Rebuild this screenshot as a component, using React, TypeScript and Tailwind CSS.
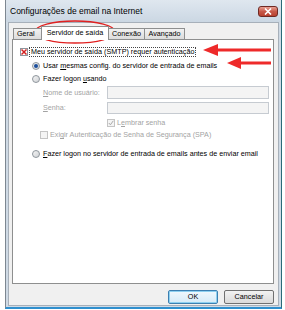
import React from "react";

const F = { fontFamily: '"Liberation Sans", Arial, sans-serif' };

function Radio({ checked }: { checked?: boolean }) {
  return (
    <span className="w-[8px] h-[8px] rounded-full border border-[#8e959c] bg-gradient-to-br from-[#f4f4f4] to-[#d0d3d6] flex items-center justify-center shrink-0">
      {checked && <span className="w-[4px] h-[4px] rounded-full bg-[#1c4f9c]" />}
    </span>
  );
}

function Box({ children, disabled }: { children?: React.ReactNode; disabled?: boolean }) {
  return (
    <span
      className={
        "w-[8px] h-[8px] border flex items-center justify-center shrink-0 " +
        (disabled ? "border-[#c4c4c4] bg-[#f4f4f4]" : "border-[#8e959c] bg-white")
      }
    >
      {children}
    </span>
  );
}

export default function App() {
  return (
    <div className="w-[285px] h-[310px] bg-white relative overflow-hidden" style={F}>
      <div className="ml-[5px] w-[277px] h-[309px] flex flex-col bg-[#cfdae5] border-l border-l-[#7d8791] border-r border-r-[#2c6a78] border-b-2 border-b-[#2f8fce]">
        {/* title bar */}
        <div className="h-[22px] shrink-0 flex items-center justify-between pl-[4px] pr-[3px] bg-gradient-to-b from-[#dfe7ef] to-[#cbd7e3]">
          <span className="text-[8.5px] text-black leading-none">Configurações de email na Internet</span>
          <span className="w-[20px] h-[11px] rounded-[3px] border border-[#6e2a24] bg-gradient-to-b from-[#e8a093] via-[#c75848] to-[#b8402e] flex items-center justify-center">
            <svg width="8" height="7" viewBox="0 0 8 7">
              <path d="M1 0.5 L7 6.5 M7 0.5 L1 6.5" stroke="white" strokeWidth="1.6" />
            </svg>
          </span>
        </div>
        {/* body */}
        <div className="flex-1 mx-[2px] mb-[1px] bg-[#f0f0f0] border border-[#a7b0ba] flex flex-col pl-[3px] pr-[4px]">
          {/* tabs */}
          <div className="flex items-end h-[16px] pl-[1px] text-[7.2px] text-black leading-none relative z-10">
            <div className="h-[11px] w-[30px] border border-[#8e8f8f] border-b-0 bg-gradient-to-b from-[#f2f2f2] to-[#dcdcdc] flex items-center pl-[3px] -mr-[2px]">Geral</div>
            <div className="h-[14px] w-[68px] border border-[#8e8f8f] border-b-0 bg-white flex items-center justify-center mb-[-1px] pb-[1px] relative z-10">Servidor de saída</div>
            <div className="h-[11px] w-[36px] border border-[#8e8f8f] border-b-0 border-l-0 bg-gradient-to-b from-[#f2f2f2] to-[#dcdcdc] flex items-center justify-center">Conexão</div>
            <div className="h-[11px] w-[40px] border border-[#8e8f8f] border-b-0 border-l-0 bg-gradient-to-b from-[#f2f2f2] to-[#dcdcdc] flex items-center justify-center">Avançado</div>
          </div>
          {/* panel */}
          <div className="h-[245px] bg-white border border-[#8e8f8f] text-[7.2px] leading-none text-black pl-[7px] pt-[7px]">
            <div className="flex items-center h-[10px] gap-[1px]">
              <Box>
                <svg width="6" height="6" viewBox="0 0 6 6">
                  <path d="M0.5 0.5 L5.5 5.5 M5.5 0.5 L0.5 5.5" stroke="#d42020" strokeWidth="1.5" />
                </svg>
              </Box>
              <span className="border border-dotted border-[#444] px-[1px] h-[10px] flex items-center">
                Meu servidor de saída (SMTP) requer autenticação
              </span>
            </div>
            <div className="pl-[12px] mt-[4px] flex flex-col">
              <div className="flex items-center h-[10px] gap-[3px]">
                <Radio checked />
                <span>
                  Usar <span className="underline">m</span>esmas config. do servidor de entrada de emails
                </span>
              </div>
              <div className="flex items-center h-[10px] gap-[3px] mt-[3px]">
                <Radio />
                <span>
                  Fazer logon <span className="underline">u</span>sando
                </span>
              </div>
              <div className="flex items-center h-[13px] mt-[2px] pl-[11px] text-[#a3a3a3]">
                <span className="w-[64px]">
                  <span className="underline">N</span>ome de usuário:
                </span>
                <span className="w-[162px] h-[13px] border border-[#c6cbd1] bg-[#f4f4f4]" />
              </div>
              <div className="flex items-center h-[12px] mt-[3px] pl-[11px] text-[#a3a3a3]">
                <span className="w-[64px]">
                  <span className="underline">S</span>enha:
                </span>
                <span className="w-[162px] h-[12px] border border-[#c6cbd1] bg-[#f4f4f4]" />
              </div>
              <div className="flex items-center h-[10px] mt-[4px] pl-[75px] gap-[2px] text-[#a3a3a3]">
                <Box disabled>
                  <svg width="6" height="6" viewBox="0 0 6 6">
                    <path d="M0.8 3 L2.4 4.8 L5.3 0.8" stroke="#a9a9a9" strokeWidth="1" fill="none" />
                  </svg>
                </Box>
                <span>
                  L<span className="underline">e</span>mbrar senha
                </span>
              </div>
              <div className="flex items-center h-[10px] mt-[2px] pl-[8px] gap-[2px] text-[#a3a3a3]">
                <Box disabled />
                <span>
                  Exi<span className="underline">g</span>ir Autenticação de Senha de Segurança (SPA)
                </span>
              </div>
              <div className="flex items-center h-[10px] gap-[3px] mt-[9px]">
                <Radio />
                <span>
                  <span className="underline">F</span>azer logon no servidor de entrada de emails antes de enviar email
                </span>
              </div>
            </div>
          </div>
          {/* buttons */}
          <div className="flex justify-end gap-[6px] mt-[6px] text-[7.2px] leading-none text-black">
            <div className="w-[50px] h-[14px] rounded-[2px] border border-[#3c7fb1] bg-gradient-to-b from-[#f0f8fd] to-[#d6ebf8] shadow-[inset_0_0_0_1px_#8ed0f0] flex items-center justify-center">OK</div>
            <div className="w-[50px] h-[14px] rounded-[2px] border border-[#707070] bg-gradient-to-b from-[#f2f2f2] to-[#dadada] flex items-center justify-center">Cancelar</div>
          </div>
        </div>
      </div>

      {/* annotations */}
      <svg className="absolute left-0 top-0" width="285" height="310" viewBox="0 0 285 310">
        <ellipse cx="75" cy="32" rx="40" ry="11" fill="none" stroke="#e02020" strokeWidth="1.3" />
        <line x1="216" y1="50" x2="271" y2="50" stroke="#ee2a2a" strokeWidth="3" />
        <polygon points="203,50 218,44 218,56" fill="#ee2a2a" />
        <line x1="239" y1="63" x2="271" y2="63" stroke="#ee2a2a" strokeWidth="3" />
        <polygon points="227,63 241,57 241,69" fill="#ee2a2a" />
      </svg>
    </div>
  );
}
